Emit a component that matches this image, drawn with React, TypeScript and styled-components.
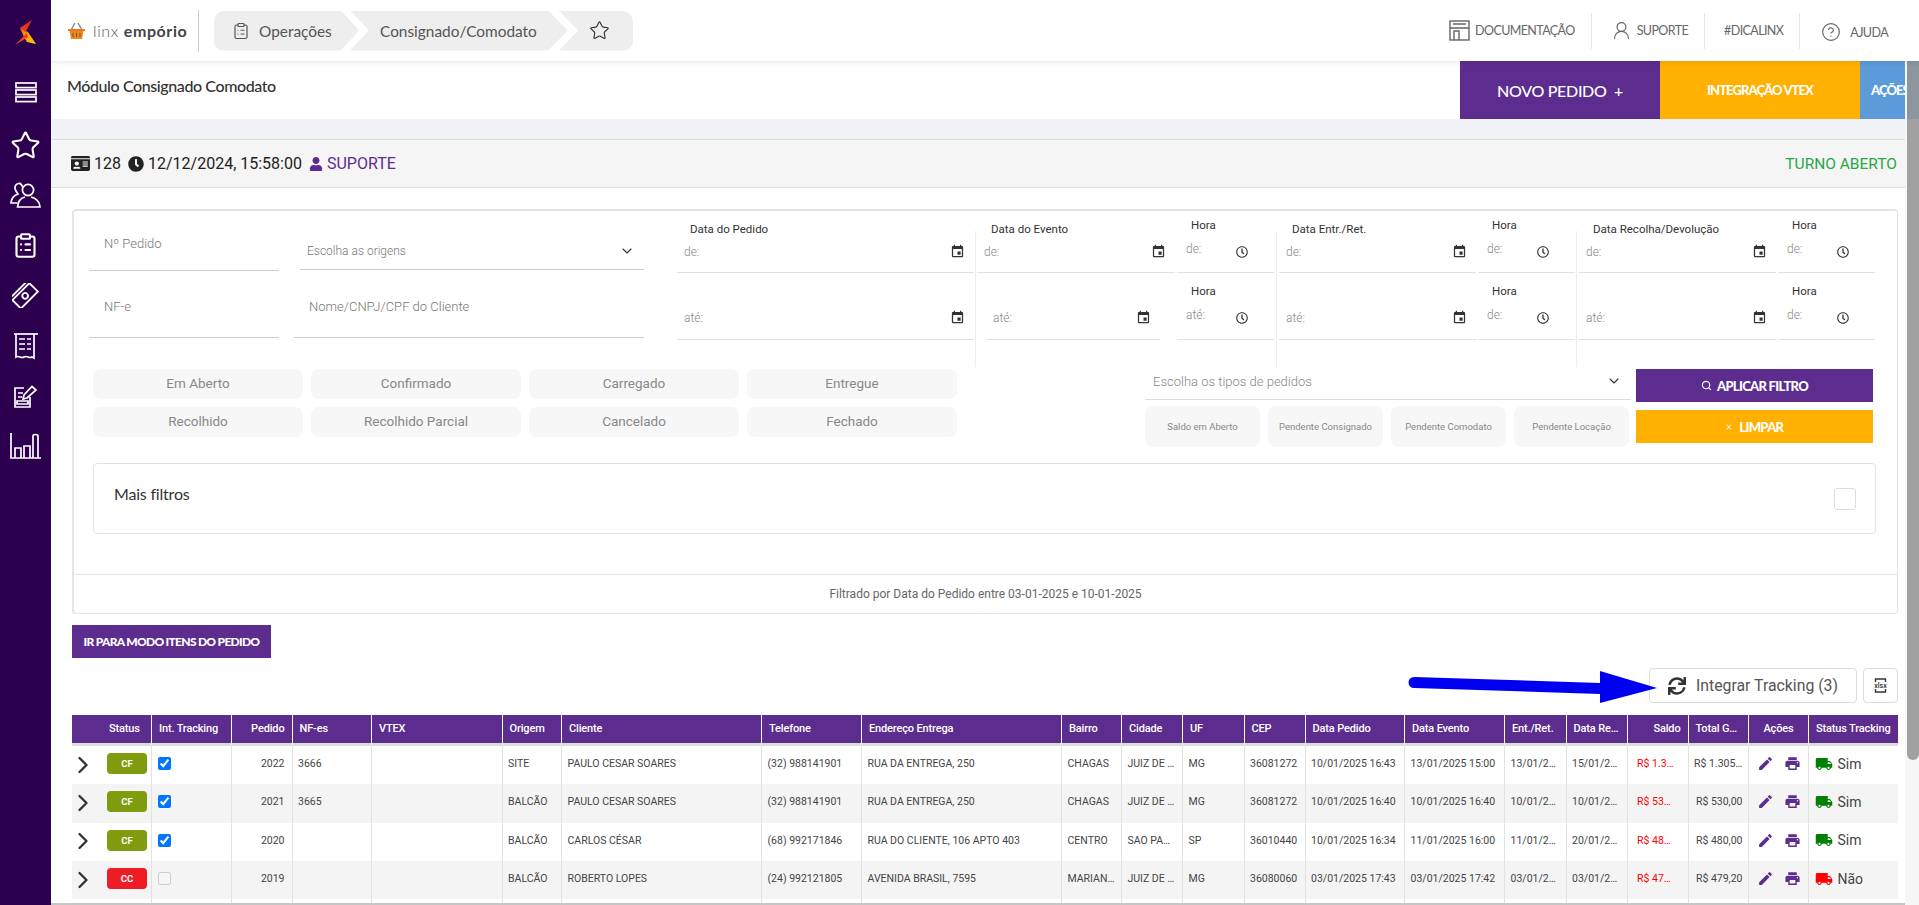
import React from "react";
import styled, { createGlobalStyle } from "styled-components";
import { ChevronDown, ChevronRight, CircleHelp, ClipboardList, Search, Star, UserRound } from "lucide-react";
import { FaClock, FaIdCard, FaRegClock, FaSync, FaUser } from "react-icons/fa";
import { MdEdit, MdEvent, MdLocalPrintshop, MdLocalShipping } from "react-icons/md";

const PURPLE = "#5c2d8e";
const AMBER = "#ffb000";
const DIN = `"Lato", "Liberation Sans", sans-serif`;

const GlobalStyle = createGlobalStyle`
  html, body {
    margin: 0;
    height: 100%;
    overflow: hidden;
    background: #fff;
    font-family: "Roboto", "Liberation Sans", sans-serif;
  }
  * { box-sizing: border-box; }
`;

const Shell = styled.div`
  display: flex;
  width: 1919px;
  height: 905px;
  overflow: hidden;
`;

const Side = styled.aside`
  flex: 0 0 51px;
  display: flex;
  flex-direction: column;
  align-items: center;
  padding-top: 20px;
  background: #2d004f;
`;

const SideLogo = styled.div`
  height: 25px;
  margin-bottom: 22px;
`;

const SideItem = styled.div<{ $mb?: number }>`
  height: 50.2px;
  margin-bottom: ${(p) => p.$mb ?? 0}px;
  display: flex;
  align-items: center;
  justify-content: center;
  color: #fff;
`;

const Main = styled.div`
  flex: 1;
  min-width: 0;
  display: flex;
  flex-direction: column;
`;

const TopBar = styled.header`
  position: relative;
  z-index: 1;
  flex: 0 0 61px;
  display: flex;
  align-items: center;
  background: #fff;
  box-shadow: 0 2px 5px rgba(0, 0, 0, 0.08);
`;

const Brand = styled.div`
  display: flex;
  align-items: center;
  height: 42px;
  width: 132px;
  margin-left: 16px;
  border-right: 1px solid #ccc;
  white-space: nowrap;
`;

const BrandName = styled.span`
  margin-left: 7px;
  font: 300 16px ${DIN};
  letter-spacing: 0.6px;
  color: #555;
  b {
    font-weight: 700;
    color: #444;
  }
`;

const Crumbs = styled.nav`
  display: flex;
  height: 40px;
  margin-left: 15px;
  border-radius: 10px;
  overflow: hidden;
`;

const Crumb = styled.div<{ $first?: boolean; $w: number }>`
  width: ${(p) => p.$w}px;
  margin-left: ${(p) => (p.$first ? 0 : -9)}px;
  padding-left: ${(p) => (p.$first ? 18 : 30)}px;
  display: flex;
  align-items: center;
  gap: 9px;
  background: #eeeeee;
  color: #555;
  font: 400 15.4px ${DIN};
  white-space: nowrap;
  clip-path: ${(p) =>
    p.$first
      ? "polygon(0 0, calc(100% - 18px) 0, 100% 50%, calc(100% - 18px) 100%, 0 100%)"
      : "polygon(0 0, calc(100% - 20px) 0, 100% 50%, calc(100% - 20px) 100%, 0 100%, 19px 50%)"};
`;

const LastCrumb = styled(Crumb)`
  clip-path: polygon(0 0, 100% 0, 100% 100%, 0 100%, 19px 50%);
`;

const TopNav = styled.nav`
  display: flex;
  align-items: center;
  margin-left: auto;
  margin-right: 31px;
`;

const TopLink = styled.a<{ $pad: number; $gap?: number; $drop?: boolean }>`
  display: flex;
  align-items: center;
  gap: ${(p) => p.$gap ?? 5}px;
  height: 36px;
  padding: ${(p) => (p.$drop ? 3 : 0)}px 16px 0 ${(p) => p.$pad}px;
  border-right: 1px solid #e6e6e6;
  font: 400 12.5px ${DIN};
  letter-spacing: -0.6px;
  color: #666;
  &:last-child {
    border-right: 0;
    padding-right: 0;
  }
`;

const Body = styled.div`
  flex: 1;
  min-height: 0;
  display: flex;
`;

const Workspace = styled.div`
  flex: 1;
  min-width: 0;
  display: flex;
  flex-direction: column;
`;

const ScrollTrack = styled.div`
  flex: 0 0 14px;
  padding-left: 2px;
  background: #f7f7f7;
`;

const ScrollThumb = styled.div`
  height: 699px;
  border-radius: 0 0 6px 6px;
  background: linear-gradient(#8d959e 58px, #a1a1a1 58px);
`;

const TitleRow = styled.div`
  flex: 0 0 58px;
  display: flex;
  background: #fff;
`;

const PageTitle = styled.h1`
  flex: 1;
  margin: 15px 0 0 16px;
  font: 500 16px ${DIN};
  letter-spacing: -0.4px;
  color: #333;
`;

const ActionTab = styled.button<{ $bg: string; $w: number; $size: number; $align?: string }>`
  flex: 0 0 ${(p) => p.$w}px;
  display: flex;
  align-items: center;
  justify-content: ${(p) => p.$align ?? "center"};
  padding: 0 0 0 ${(p) => (p.$align ? 11 : 0)}px;
  border: 0;
  overflow: hidden;
  white-space: nowrap;
  background: ${(p) => p.$bg};
  color: #fff;
  font: ${(p) => (p.$size > 14 ? 500 : 900)} ${(p) => p.$size}px ${DIN};
  letter-spacing: ${(p) => (p.$size > 14 ? -0.3 : -0.9)}px;
`;

const Band = styled.div`
  flex: 0 0 20px;
  background: #f0f2f5;
`;

const StatusBar = styled.div`
  flex: 0 0 49px;
  display: flex;
  align-items: center;
  gap: 7px;
  padding: 0 8px 0 20px;
  background: #f5f5f5;
  border-top: 1px solid #ddd;
  border-bottom: 1px solid #ddd;
  font-size: 16px;
  font-weight: 400;
  color: #222;
`;

const StatusItem = styled.span<{ $purple?: boolean }>`
  display: inline-flex;
  align-items: center;
  gap: 4px;
  color: ${(p) => (p.$purple ? PURPLE : "#222")};
`;

const Shift = styled.span`
  margin-left: auto;
  font-size: 15.5px;
  color: #28a745;
`;

const Content = styled.div`
  flex: 1;
  min-height: 0;
  display: flex;
  flex-direction: column;
  padding: 21px 7px 0 21px;
`;

const FilterCard = styled.section`
  flex: 0 0 405px;
  display: flex;
  flex-direction: column;
  border: 2px solid #e4e4e4;
  border-bottom-width: 1px;
  border-right-width: 1px;
  border-radius: 4px;
`;

const FilterBody = styled.div`
  flex: 1;
`;

const TopFilters = styled.div`
  display: flex;
  height: 156px;
`;

const LeftFields = styled.div`
  flex: 0 0 555px;
  margin-left: 15px;
  display: flex;
  flex-direction: column;
`;

const LeftRow = styled.div<{ $h: number }>`
  flex: 0 0 ${(p) => p.$h}px;
  display: flex;
  align-items: flex-end;
`;

const TextField = styled.div<{ $w: number; $ml?: number; $inset: number; $pb: number; $size?: number; $mb?: number }>`
  width: ${(p) => p.$w}px;
  margin: 0 0 ${(p) => p.$mb ?? 0}px ${(p) => p.$ml ?? 0}px;
  padding: 0 9px ${(p) => p.$pb}px ${(p) => p.$inset}px;
  display: flex;
  align-items: center;
  justify-content: space-between;
  border-bottom: 1px solid #ccc;
  font-size: ${(p) => p.$size ?? 13}px;
  line-height: 16px;
  font-weight: 300;
  color: #777;
`;

const DateCol = styled.div<{ $w: number; $ml: number }>`
  flex: 0 0 ${(p) => p.$w}px;
  margin-left: ${(p) => p.$ml}px;
  display: flex;
  flex-direction: column;
`;

const Slot = styled.div<{ $h: number; $ml?: number; $mr?: number }>`
  flex: 0 0 ${(p) => p.$h}px;
  margin: 0 ${(p) => p.$mr ?? 0}px 0 ${(p) => p.$ml ?? 0}px;
  display: flex;
  flex-direction: column;
  justify-content: flex-end;
`;

const MiniLabel = styled.label<{ $ml: number; $mb: number }>`
  margin: 0 0 ${(p) => p.$mb}px ${(p) => p.$ml}px;
  font-size: 11.5px;
  line-height: 14px;
  font-weight: 400;
  color: #333;
`;

const DateBox = styled.div<{ $h: number; $lift?: boolean }>`
  height: ${(p) => p.$h}px;
  display: flex;
  align-items: center;
  justify-content: space-between;
  padding: 0 ${(p) => (p.$lift ? 26 : 9)}px 0 ${(p) => (p.$lift ? 9 : 7)}px;
  border-bottom: 1px solid #e2e2e2;
  font-size: 12px;
  font-weight: 300;
  color: #888;
  span {
    padding-bottom: ${(p) => (p.$lift ? 5 : 0)}px;
  }
  svg {
    color: #333;
    flex-shrink: 0;
  }
`;

const VLine = styled.div<{ $ml: number }>`
  flex: 0 0 1px;
  margin-left: ${(p) => p.$ml}px;
  margin-top: 20px;
  background: #eee;
`;

const LowerFilters = styled.div`
  display: flex;
  align-items: flex-start;
  margin-top: 2px;
  padding-left: 19px;
`;

const ChipGrid = styled.div`
  display: grid;
  grid-template-columns: repeat(4, 210px);
  grid-auto-rows: 30px;
  gap: 8px;
`;

const Chip = styled.button<{ $size?: number }>`
  border: 0;
  border-radius: 8px;
  background: #f7f7f7;
  color: #888;
  font: 400 ${(p) => p.$size ?? 13.5}px "Roboto", sans-serif;
  white-space: nowrap;
  padding: 0 0 ${(p) => (p.$size ? 0 : 2)}px;
`;

const TypeCol = styled.div`
  flex: 0 0 486px;
  margin-left: 188px;
  display: flex;
  flex-direction: column;
  gap: 6px;
`;

const TypeSelect = styled.div`
  height: 31px;
  display: flex;
  align-items: center;
  justify-content: space-between;
  padding: 0 9px 6px 8px;
  border-bottom: 1px solid #ddd;
  font-size: 13px;
  font-weight: 300;
  color: #888;
`;

const TypeChips = styled.div`
  display: grid;
  grid-template-columns: repeat(4, 115px);
  grid-auto-rows: 41px;
  gap: 8px;
`;

const ApplyCol = styled.div`
  flex: 0 0 237px;
  margin-left: 5px;
  display: flex;
  flex-direction: column;
  gap: 8px;
`;

const ApplyButton = styled.button<{ $bg: string }>`
  height: 33px;
  display: flex;
  align-items: center;
  justify-content: center;
  gap: 5px;
  padding: 0;
  border: 0;
  background: ${(p) => p.$bg};
  color: #fff;
  font: 900 13px ${DIN};
  letter-spacing: -0.7px;
  small {
    font-size: 11px;
    font-weight: 400;
    margin-right: 3px;
  }
`;

const MoreFilters = styled.div`
  display: flex;
  align-items: center;
  justify-content: space-between;
  width: 1783px;
  height: 71px;
  margin: 16px 0 0 19px;
  padding: 0 19px 0 20px;
  border: 1px solid #e3e3e3;
  border-radius: 4px;
  font: 400 16px ${DIN};
  letter-spacing: -0.2px;
  color: #333;
  > span:first-child {
    padding-bottom: 10px;
  }
`;

const FakeCheck = styled.span`
  width: 22px;
  height: 22px;
  border: 1.5px solid #ddd;
  border-radius: 3px;
`;

const CardFooter = styled.footer`
  flex: 0 0 39px;
  display: flex;
  align-items: center;
  justify-content: center;
  border-top: 1px solid #e4e4e4;
  font-size: 12px;
  color: #666;
`;

const ModeButton = styled.button`
  align-self: flex-start;
  width: 199px;
  height: 33px;
  margin-top: 11px;
  padding: 0;
  border: 0;
  background: ${PURPLE};
  color: #fff;
  font: 900 12px ${DIN};
  letter-spacing: -0.7px;
  white-space: nowrap;
`;

const Toolbar = styled.div`
  position: relative;
  display: flex;
  justify-content: flex-end;
  gap: 6px;
  margin-top: 10px;
`;

const OutlineButton = styled.button<{ $w: number }>`
  width: ${(p) => p.$w}px;
  height: 35px;
  display: flex;
  align-items: center;
  justify-content: center;
  gap: 10px;
  padding: 0;
  background: #fff;
  border: 1px solid #ddd;
  border-radius: 4px;
  color: #555;
  font: 400 15.8px "Roboto", sans-serif;
  svg {
    color: #333;
  }
`;

const ArrowOverlay = styled.svg`
  position: absolute;
  top: 0;
  right: 238px;
  z-index: 2;
`;

const TableWrap = styled.div`
  flex: 1;
  min-height: 0;
  margin-top: 12px;
  overflow: hidden;
`;

const Grid = styled.table`
  table-layout: fixed;
  width: 1826px;
  border-collapse: separate;
  border-spacing: 0;
`;

const Col = styled.col<{ $w: number }>`
  width: ${(p) => p.$w}px;
`;

const Th = styled.th<{ $align?: string }>`
  height: 31px;
  padding: 0 7px 1px;
  background: ${PURPLE};
  border-right: 1px solid #fff;
  border-bottom: 3px solid #ddd;
  color: #fff;
  font-size: 11px;
  font-weight: 500;
  letter-spacing: -0.15px;
  text-align: ${(p) => p.$align ?? "left"};
  white-space: nowrap;
  overflow: hidden;
  text-overflow: ellipsis;
  &:first-child {
    padding-left: 37px;
  }
  &:last-child {
    border-right: 0;
    padding-right: 0;
  }
`;

const Tr = styled.tr`
  height: 38.3px;
  &:nth-child(even) td {
    background: #f4f4f4;
  }
`;

const Td = styled.td<{ $align?: string; $red?: boolean; $pad?: number; $pr?: number }>`
  padding: 0 ${(p) => p.$pr ?? p.$pad ?? 5.5}px 3px ${(p) => p.$pad ?? 5.5}px;
  border-right: 1px solid #e2e2e2;
  font-size: 10.5px;
  color: ${(p) => (p.$red ? "#f00" : "#444")};
  text-align: ${(p) => p.$align ?? "left"};
  white-space: nowrap;
  overflow: hidden;
  text-overflow: ellipsis;
  &:last-child {
    border-right: 0;
  }
`;

const StatusCell = styled.div`
  display: flex;
  align-items: center;
  gap: 10px;
  margin-left: -3px;
  color: #333;
  svg {
    margin-top: 2px;
  }
`;

const Badge = styled.span<{ $bg: string }>`
  width: 40px;
  height: 21px;
  display: flex;
  align-items: center;
  justify-content: center;
  border-radius: 4px;
  background: ${(p) => p.$bg};
  color: #fff;
  font-size: 9.5px;
  font-weight: 700;
`;

const TrackCheck = styled.input`
  display: block;
  width: 13px;
  height: 13px;
  margin: 0;
`;

const IconRow = styled.div`
  display: flex;
  align-items: center;
  justify-content: center;
  gap: 10px;
  color: ${PURPLE};
`;

const TrackState = styled.div<{ $ok: boolean }>`
  display: flex;
  align-items: center;
  gap: 5px;
  font-size: 14px;
  font-weight: 400;
  color: #444;
  svg {
    color: ${(p) => (p.$ok ? "#008000" : "#f00")};
  }
`;

const HScroll = styled.div`
  flex: 0 0 2px;
  background: #c6c6c6;
`;

const Logo = () => (
  <svg width="22" height="25" viewBox="0 0 22 25">
    <defs>
      <linearGradient id="lgA" x1="0.8" y1="0" x2="0.1" y2="1">
        <stop offset="0" stopColor="#e8291c" />
        <stop offset="1" stopColor="#f2541b" />
      </linearGradient>
      <linearGradient id="lgB" x1="0" y1="0" x2="1" y2="1">
        <stop offset="0" stopColor="#f26b1d" />
        <stop offset="1" stopColor="#ffd800" />
      </linearGradient>
    </defs>
    <path d="M5 8 L13 12 L21 24 L12 22 L9 17 Z" fill="url(#lgB)" />
    <path d="M17 0 L5 8 L12 13 L0 25 L13 17 L11 11 Z" fill="url(#lgA)" />
  </svg>
);

const Basket = () => (
  <svg width="19" height="18" viewBox="0 0 19 18">
    <path d="M4 8 L8 1 M15 8 L11 1" stroke="#888" strokeWidth="1.4" fill="none" />
    <path d="M1 7 H18 V9 H1 Z" fill="#e57a1e" />
    <path d="M2.5 9 H16.5 L15 17 H4 Z" fill="#e8891f" />
    <path d="M6 11 V15 M9.5 11 V15 M13 11 V15" stroke="#8a4a12" strokeWidth="1" />
  </svg>
);

const MenuGlyph = () => (
  <svg width="22" height="21" viewBox="0 0 22 21" fill="none" stroke="currentColor" strokeWidth="1.7">
    <rect x="1" y="1" width="20" height="4.6" />
    <rect x="1" y="8" width="20" height="4.6" />
    <rect x="1" y="15" width="20" height="4.6" />
  </svg>
);

const UsersGlyph = () => (
  <svg width="31" height="26" viewBox="0 0 31 26" fill="none" stroke="currentColor" strokeWidth="1.7">
    <circle cx="18" cy="8" r="5.6" />
    <path d="M15 15 C10 16 8 20 7.5 25 H30 C30 20 26 16 21 15" />
    <path d="M12.8 5.6 C12 3 10.5 1 8.5 1.5 C5 2 4 6 6 9 C6.5 10 7.5 11 8 12 C5 13 1.5 15 1 21 H7.5" />
  </svg>
);

const MoneyGlyph = () => (
  <svg width="27" height="25" viewBox="0 0 27 25" fill="none" stroke="currentColor" strokeWidth="1.8">
    <g transform="rotate(-45 13.5 12.5)">
      <rect x="1" y="6.5" width="24" height="12" />
      <circle cx="13" cy="12.5" r="2.8" />
      <path d="M3 3.5 H24" />
    </g>
  </svg>
);

const ReceiptGlyph = () => (
  <svg width="24" height="27" viewBox="0 0 24 27" fill="none" stroke="currentColor" strokeWidth="1.7">
    <path d="M0 1 H24" />
    <path d="M2 1 V24 C5 22 7 26 10 24 C13 22 15 26 18 24 L20 25 V1" />
    <path d="M5 6 H11 M13 6 H17 M5 11 H11 M13 11 H17 M5 16 H11 M13 16 H17" />
  </svg>
);

const NoteGlyph = () => (
  <svg width="23" height="23" viewBox="0 0 23 23" fill="none" stroke="currentColor" strokeWidth="1.7">
    <path d="M10 3 H1 V22 H16 V12" />
    <path d="M4 8 H9 M4 12 H8 M3 16 H14 V19 H3 Z" />
    <path d="M9 14 L10 10 L18 1.5 L22 5 L13 13 Z" fill="#2d004f" />
  </svg>
);

const ChartGlyph = () => (
  <svg width="31" height="27" viewBox="0 0 31 27" fill="none" stroke="currentColor" strokeWidth="1.7">
    <path d="M1 0 V25 H31" />
    <path d="M5 25 V15 H11 V25 M14 25 V13 H20 V25 M23 25 V3 C23 1 28 1 28 3 V25" />
  </svg>
);

const DocGlyph = () => (
  <svg width="21" height="21" viewBox="0 0 21 21" fill="none" stroke="#666" strokeWidth="1.4">
    <rect x="1" y="1" width="19" height="19" />
    <path d="M1 8 H20 M4 4 H17 M5 20 V11 H10 V20" />
  </svg>
);

const XlsxGlyph = () => (
  <svg width="17" height="15" viewBox="0 0 17 15">
    <path d="M3.5 4 V1 H13.5 V4 M3.5 11 V14 H13.5 V11" fill="none" stroke="#333" strokeWidth="1.4" />
    <text x="8.5" y="10" textAnchor="middle" fontSize="7" fontWeight="500" fontFamily="Roboto, sans-serif" fill="#333">
      xlsx
    </text>
  </svg>
);

const columns: { label: string; w: number; align?: string }[] = [
  { label: "Status", w: 80 },
  { label: "Int. Tracking", w: 80 },
  { label: "Pedido", w: 60.5, align: "right" },
  { label: "NF-es", w: 79.5 },
  { label: "VTEX", w: 130.5 },
  { label: "Origem", w: 59.5 },
  { label: "Cliente", w: 200 },
  { label: "Telefone", w: 100 },
  { label: "Endereço Entrega", w: 200 },
  { label: "Bairro", w: 60 },
  { label: "Cidade", w: 61 },
  { label: "UF", w: 61.5 },
  { label: "CEP", w: 61 },
  { label: "Data Pedido", w: 99.5 },
  { label: "Data Evento", w: 100 },
  { label: "Ent./Ret.", w: 61.5 },
  { label: "Data Recolha", w: 61.5 },
  { label: "Saldo", w: 60.5, align: "right" },
  { label: "Total Geral", w: 60.5 },
  { label: "Ações", w: 60, align: "center" },
  { label: "Status Tracking", w: 89 },
];

const rows = [
  { st: "CF", on: true, ped: "2022", nf: "3666", or: "SITE", cli: "PAULO CESAR SOARES", tel: "(32) 988141901", end: "RUA DA ENTREGA, 250", bai: "CHAGAS", cid: "JUIZ DE FORA", uf: "MG", cep: "36081272", dp: "10/01/2025 16:43", de: "13/01/2025 15:00", ent: "13/01/2025 15:00", rec: "15/01/2025 15:00", sal: "R$ 1.305,00", tot: "R$ 1.305,00", ok: true },
  { st: "CF", on: true, ped: "2021", nf: "3665", or: "BALCÃO", cli: "PAULO CESAR SOARES", tel: "(32) 988141901", end: "RUA DA ENTREGA, 250", bai: "CHAGAS", cid: "JUIZ DE FORA", uf: "MG", cep: "36081272", dp: "10/01/2025 16:40", de: "10/01/2025 16:40", ent: "10/01/2025 16:40", rec: "10/01/2025 16:40", sal: "R$ 530,00", tot: "R$ 530,00", ok: true },
  { st: "CF", on: true, ped: "2020", nf: "", or: "BALCÃO", cli: "CARLOS CÉSAR", tel: "(68) 992171846", end: "RUA DO CLIENTE, 106 APTO 403", bai: "CENTRO", cid: "SAO PAULO", uf: "SP", cep: "36010440", dp: "10/01/2025 16:34", de: "11/01/2025 16:00", ent: "11/01/2025 16:00", rec: "20/01/2025 16:00", sal: "R$ 480,00", tot: "R$ 480,00", ok: true },
  { st: "CC", on: false, ped: "2019", nf: "", or: "BALCÃO", cli: "ROBERTO LOPES", tel: "(24) 992121805", end: "AVENIDA BRASIL, 7595", bai: "MARIANO PROCOPIO", cid: "JUIZ DE FORA", uf: "MG", cep: "36080060", dp: "03/01/2025 17:43", de: "03/01/2025 17:42", ent: "03/01/2025 17:42", rec: "03/01/2025 17:42", sal: "R$ 479,20", tot: "R$ 479,20", ok: false },
];

const DateField = ({ text, h, lift, icon }: { text: string; h: number; lift?: boolean; icon: "cal" | "clock" }) => (
  <DateBox $h={h} $lift={lift}>
    <span>{text}</span>
    {icon === "cal" ? <MdEvent size={15} /> : <FaRegClock size={12} />}
  </DateBox>
);

const HourCol = ({ ml, second }: { ml: number; second: string }) => (
  <DateCol $w={97} $ml={ml}>
    <Slot $h={62}>
      <MiniLabel $ml={14} $mb={-1}>Hora</MiniLabel>
      <DateField text="de:" h={42} lift icon="clock" />
    </Slot>
    <Slot $h={67}>
      <MiniLabel $ml={14} $mb={-2}>Hora</MiniLabel>
      <DateField text={second} h={44} lift icon="clock" />
    </Slot>
  </DateCol>
);

const DayCol = ({ label, w, ml, labelMl, inset }: { label: string; w: number; ml: number; labelMl: number; inset?: boolean }) => (
  <DateCol $w={w} $ml={ml}>
    <Slot $h={62}>
      <MiniLabel $ml={labelMl} $mb={-5}>{label}</MiniLabel>
      <DateField text="de:" h={42} icon="cal" />
    </Slot>
    <Slot $h={67} $ml={inset ? 9 : 0} $mr={inset ? 15 : 0}>
      <DateField text="até:" h={44} icon="cal" />
    </Slot>
  </DateCol>
);

export default function App() {
  return (
    <Shell>
      <GlobalStyle />
      <Side>
        <SideLogo>
          <Logo />
        </SideLogo>
        <SideItem $mb={3}><MenuGlyph /></SideItem>
        <SideItem><Star size={31} strokeWidth={1.6} /></SideItem>
        <SideItem><UsersGlyph /></SideItem>
        <SideItem><ClipboardList size={27} strokeWidth={1.9} /></SideItem>
        <SideItem><MoneyGlyph /></SideItem>
        <SideItem><ReceiptGlyph /></SideItem>
        <SideItem><NoteGlyph /></SideItem>
        <SideItem><ChartGlyph /></SideItem>
      </Side>
      <Main>
        <TopBar>
          <Brand>
            <Basket />
            <BrandName>linx <b>empório</b></BrandName>
          </Brand>
          <Crumbs>
            <Crumb $first $w={145}>
              <ClipboardList size={18} strokeWidth={1.6} />
              Operações
            </Crumb>
            <Crumb $w={218}>Consignado/Comodato</Crumb>
            <LastCrumb $w={74}>
              <Star size={21} strokeWidth={1.3} color="#333" />
            </LastCrumb>
          </Crumbs>
          <TopNav>
            <TopLink $pad={16}><DocGlyph />DOCUMENTAÇÃO</TopLink>
            <TopLink $pad={19}><UserRound size={21} strokeWidth={1.4} />SUPORTE</TopLink>
            <TopLink $pad={19}>#DICALINX</TopLink>
            <TopLink $pad={21} $gap={9} $drop><CircleHelp size={20} strokeWidth={1.4} />AJUDA</TopLink>
          </TopNav>
        </TopBar>
        <Body>
          <Workspace>
            <TitleRow>
              <PageTitle>Módulo Consignado Comodato</PageTitle>
              <ActionTab $bg={PURPLE} $w={200} $size={16}>NOVO PEDIDO&nbsp;&nbsp;+</ActionTab>
              <ActionTab $bg={AMBER} $w={200} $size={13}>INTEGRAÇÃO VTEX</ActionTab>
              <ActionTab $bg="#5b9bd9" $w={45} $size={13} $align="flex-start">AÇÕES</ActionTab>
            </TitleRow>
            <Band />
            <StatusBar>
              <StatusItem><FaIdCard size={19} />128</StatusItem>
              <StatusItem><FaClock size={16} />12/12/2024, 15:58:00</StatusItem>
              <StatusItem $purple><FaUser size={14} />SUPORTE</StatusItem>
              <Shift>TURNO ABERTO</Shift>
            </StatusBar>
            <Content>
              <FilterCard>
                <FilterBody>
                  <TopFilters>
                    <LeftFields>
                      <LeftRow $h={60}>
                        <TextField $w={190} $inset={15} $pb={18}>Nº Pedido</TextField>
                        <TextField $w={344} $ml={21} $inset={7} $pb={10} $mb={1} $size={12}>
                          Escolha as origens
                          <ChevronDown size={16} strokeWidth={1.6} color="#333" />
                        </TextField>
                      </LeftRow>
                      <LeftRow $h={67}>
                        <TextField $w={190} $inset={15} $pb={22}>NF-e</TextField>
                        <TextField $w={350} $ml={15} $inset={15} $pb={22}>Nome/CNPJ/CPF do Cliente</TextField>
                      </LeftRow>
                    </LeftFields>
                    <DayCol label="Data do Pedido" w={297} ml={33} labelMl={13} />
                    <VLine $ml={1} />
                    <DayCol label="Data do Evento" w={198} ml={1} labelMl={14} inset />
                    <HourCol ml={2} second="até:" />
                    <VLine $ml={2} />
                    <DayCol label="Data Entr./Ret." w={197} ml={2} labelMl={13} />
                    <HourCol ml={2} second="de:" />
                    <VLine $ml={1} />
                    <DayCol label="Data Recolha/Devolução" w={197} ml={2} labelMl={14} />
                    <HourCol ml={2} second="de:" />
                  </TopFilters>
                  <LowerFilters>
                    <ChipGrid>
                      {["Em Aberto", "Confirmado", "Carregado", "Entregue", "Recolhido", "Recolhido Parcial", "Cancelado", "Fechado"].map((s) => (
                        <Chip key={s}>{s}</Chip>
                      ))}
                    </ChipGrid>
                    <TypeCol>
                      <TypeSelect>
                        Escolha os tipos de pedidos
                        <ChevronDown size={16} strokeWidth={1.6} color="#333" />
                      </TypeSelect>
                      <TypeChips>
                        {["Saldo em Aberto", "Pendente Consignado", "Pendente Comodato", "Pendente Locação"].map((s) => (
                          <Chip key={s} $size={9.5}>{s}</Chip>
                        ))}
                      </TypeChips>
                    </TypeCol>
                    <ApplyCol>
                      <ApplyButton $bg={PURPLE}><Search size={11} strokeWidth={2.4} />APLICAR FILTRO</ApplyButton>
                      <ApplyButton $bg={AMBER}><small>×</small>LIMPAR</ApplyButton>
                    </ApplyCol>
                  </LowerFilters>
                  <MoreFilters>
                    <span>Mais filtros</span>
                    <FakeCheck />
                  </MoreFilters>
                </FilterBody>
                <CardFooter>Filtrado por Data do Pedido entre 03-01-2025 e 10-01-2025</CardFooter>
              </FilterCard>
              <ModeButton>IR PARA MODO ITENS DO PEDIDO</ModeButton>
              <Toolbar>
                <ArrowOverlay width="252" height="36" viewBox="0 0 252 36">
                  <path d="M6 9 L192 15 L192 3 L249 20 L192 35 L192 26 L6 20 A5.5 5.5 0 0 1 6 9 Z" fill="#0000f0" />
                </ArrowOverlay>
                <OutlineButton $w={208}><FaSync size={18} />Integrar Tracking (3)</OutlineButton>
                <OutlineButton $w={35}><XlsxGlyph /></OutlineButton>
              </Toolbar>
              <TableWrap>
                <Grid>
                  <colgroup>
                    {columns.map((c) => (
                      <Col key={c.label} $w={c.w} />
                    ))}
                  </colgroup>
                  <thead>
                    <tr>
                      {columns.map((c) => (
                        <Th key={c.label} $align={c.align}>{c.label}</Th>
                      ))}
                    </tr>
                  </thead>
                  <tbody>
                    {rows.map((r) => (
                      <Tr key={r.ped}>
                        <Td $pad={0}>
                          <StatusCell>
                            <ChevronRight size={28} strokeWidth={2} />
                            <Badge $bg={r.st === "CF" ? "#7f9b0e" : "#ee1c25"}>{r.st}</Badge>
                          </StatusCell>
                        </Td>
                        <Td>
                          <TrackCheck type="checkbox" checked={r.on} disabled={!r.on} readOnly />
                        </Td>
                        <Td $align="right" $pad={7}>{r.ped}</Td>
                        <Td>{r.nf}</Td>
                        <Td />
                        <Td>{r.or}</Td>
                        <Td>{r.cli}</Td>
                        <Td>{r.tel}</Td>
                        <Td>{r.end}</Td>
                        <Td>{r.bai}</Td>
                        <Td>{r.cid}</Td>
                        <Td>{r.uf}</Td>
                        <Td>{r.cep}</Td>
                        <Td>{r.dp}</Td>
                        <Td>{r.de}</Td>
                        <Td>{r.ent}</Td>
                        <Td>{r.rec}</Td>
                        <Td $red $pad={9} $pr={12}>{r.sal}</Td>
                        <Td $align="right">{r.tot}</Td>
                        <Td $pad={0}>
                          <IconRow>
                            <MdEdit size={17} />
                            <MdLocalPrintshop size={17} />
                          </IconRow>
                        </Td>
                        <Td>
                          <TrackState $ok={r.ok}>
                            <MdLocalShipping size={18} />
                            {r.ok ? "Sim" : "Não"}
                          </TrackState>
                        </Td>
                      </Tr>
                    ))}
                    <Tr>
                      {columns.map((c) => (
                        <Td key={c.label} />
                      ))}
                    </Tr>
                  </tbody>
                </Grid>
              </TableWrap>
            </Content>
            <HScroll />
          </Workspace>
          <ScrollTrack>
            <ScrollThumb />
          </ScrollTrack>
        </Body>
      </Main>
    </Shell>
  );
}
